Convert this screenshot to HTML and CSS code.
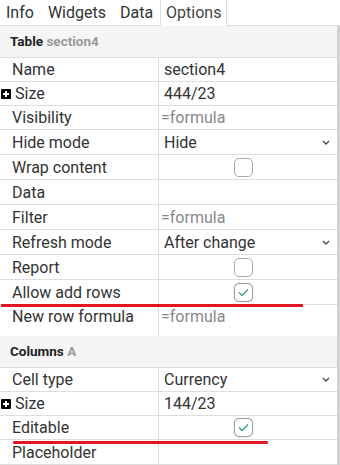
FILE: index.html
```html
<!DOCTYPE html>
<html lang="en">
<head>
    <meta charset="UTF-8">
    <meta name="viewport" content="width=device-width, initial-scale=1.0">
    <title>Options</title>
    <link rel="stylesheet" href="styles.css">
</head>
<body>
    <div class="tabs">
        <span class="tab">Info</span>
        <span class="tab">Widgets</span>
        <span class="tab">Data</span>
        <span class="tab active">Options</span>
    </div>
    <div class="content">
        <div class="group">
            <div class="group-title">Table <span class="muted">section4</span></div>
            <div class="row short"><div class="label">Name</div><div class="value">section4</div></div>
            <div class="row short"><div class="label toggle"><span class="plus"></span>Size</div><div class="value">444/23</div></div>
            <div class="row short"><div class="label">Visibility</div><div class="value"><input type="text" placeholder="=formula"></div></div>
            <div class="row"><div class="label">Hide mode</div><div class="value select">Hide<svg class="chev" width="8" height="5" viewBox="0 0 8 5"><path d="M1 1l3 3 3-3" fill="none" stroke="#444" stroke-width="1.3"/></svg></div></div>
            <div class="row"><div class="label">Wrap content</div><div class="value center"><span class="check"></span></div></div>
            <div class="row"><div class="label">Data</div><div class="value"></div></div>
            <div class="row"><div class="label">Filter</div><div class="value"><input type="text" placeholder="=formula"></div></div>
            <div class="row"><div class="label">Refresh mode</div><div class="value select">After change<svg class="chev" width="8" height="5" viewBox="0 0 8 5"><path d="M1 1l3 3 3-3" fill="none" stroke="#444" stroke-width="1.3"/></svg></div></div>
            <div class="row"><div class="label">Report</div><div class="value center"><span class="check"></span></div></div>
            <div class="row"><div class="label">Allow add rows</div><div class="value center"><span class="check on"><svg width="11" height="9" viewBox="0 0 11 9"><path d="M1 4.5l3 3 6-6" fill="none" stroke="#3aa676" stroke-width="1.4"/></svg></span></div></div>
            <div class="row last"><div class="label">New row formula</div><div class="value"><input type="text" placeholder="=formula"></div></div>
        </div>
        <div class="group">
            <div class="group-title">Columns <span class="muted">A</span></div>
            <div class="row short"><div class="label">Cell type</div><div class="value select">Currency<svg class="chev" width="8" height="5" viewBox="0 0 8 5"><path d="M1 1l3 3 3-3" fill="none" stroke="#444" stroke-width="1.3"/></svg></div></div>
            <div class="row short"><div class="label toggle"><span class="plus"></span>Size</div><div class="value">144/23</div></div>
            <div class="row short"><div class="label">Editable</div><div class="value center"><span class="check on"><svg width="11" height="9" viewBox="0 0 11 9"><path d="M1 4.5l3 3 6-6" fill="none" stroke="#3aa676" stroke-width="1.4"/></svg></span></div></div>
            <div class="row"><div class="label">Placeholder</div><div class="value"></div></div>
        </div>
        <div class="mark mark-one"></div>
        <div class="mark mark-two"></div>
    </div>
</body>
</html>
```
FILE: styles.css
```css
body {
    margin: 0;
    font-family: Roboto, "Liberation Sans", sans-serif;
    color: #333;
    background: #fff;
    width: 340px;
    overflow: hidden;
}
.tabs {
    display: flex;
    height: 25px;
    border-bottom: 1px solid #ddd;
    font-size: 16px;
    line-height: 25px;
}
.tab {
    padding: 0 7px;
}
.tab:first-child {
    padding-left: 6px;
}
.tab.active {
    padding: 0 5px;
    border: 1px solid #ddd;
    border-top: none;
    border-bottom: 1px solid #fff;
    height: 25px;
    color: #444;
}
.content {
    position: relative;
    box-sizing: border-box;
    width: 340px;
    border-right: 3px solid #d2d2d2;
}
.group-title {
    box-sizing: border-box;
    height: 32px;
    padding: 0 10px;
    line-height: 31px;
    font-size: 13.5px;
    font-weight: bold;
    color: #222;
    background: #f5f5f5;
    border-bottom: 1px solid #ddd;
}
.muted {
    color: #9a9a9a;
}
.row {
    display: grid;
    grid-template-columns: 159px 1fr;
    box-sizing: border-box;
    height: 25px;
    border-bottom: 1px solid #ddd;
    font-size: 16px;
}
.row.short {
    height: 24px;
}
.row.last {
    height: 31px;
    border-bottom: none;
}
.label {
    display: flex;
    align-items: center;
    padding-left: 12px;
    border-right: 1px solid #ddd;
}
.row.last .label,
.row.last .value {
    align-items: flex-start;
    padding-top: 2px;
}
.label.toggle {
    padding-left: 1px;
    gap: 4px;
}
.plus {
    position: relative;
    width: 10px;
    height: 10px;
    background: #000;
    border-radius: 1px;
}
.plus::before,
.plus::after {
    content: "";
    position: absolute;
    background: #fff;
}
.plus::before {
    left: 2px;
    top: 4px;
    width: 6px;
    height: 2px;
}
.plus::after {
    left: 4px;
    top: 2px;
    width: 2px;
    height: 6px;
}
.value {
    display: flex;
    align-items: center;
    padding-left: 5px;
    min-width: 0;
}
.value input {
    width: 100%;
    border: none;
    outline: none;
    padding: 0;
    margin-left: -3px;
    font: inherit;
    color: #333;
    background: transparent;
}
.value input::placeholder {
    color: #888;
}
.select {
    justify-content: space-between;
    padding-right: 7px;
}
.center {
    padding-left: 75px;
}
.check {
    display: flex;
    align-items: center;
    justify-content: center;
    box-sizing: border-box;
    width: 19px;
    height: 19px;
    border: 1px solid #a8a8a8;
    border-radius: 5px;
    background: #fff;
}
.check.on {
    border-color: #9a9a9a;
    box-shadow: 0 0 1px #bbb;
}
.mark {
    position: absolute;
    height: 3px;
    background: #e3161f;
    border-radius: 1px;
}
.mark-one {
    left: 1px;
    top: 278px;
    width: 302px;
}
.mark-two {
    left: 13px;
    top: 415px;
    width: 255px;
}
```
